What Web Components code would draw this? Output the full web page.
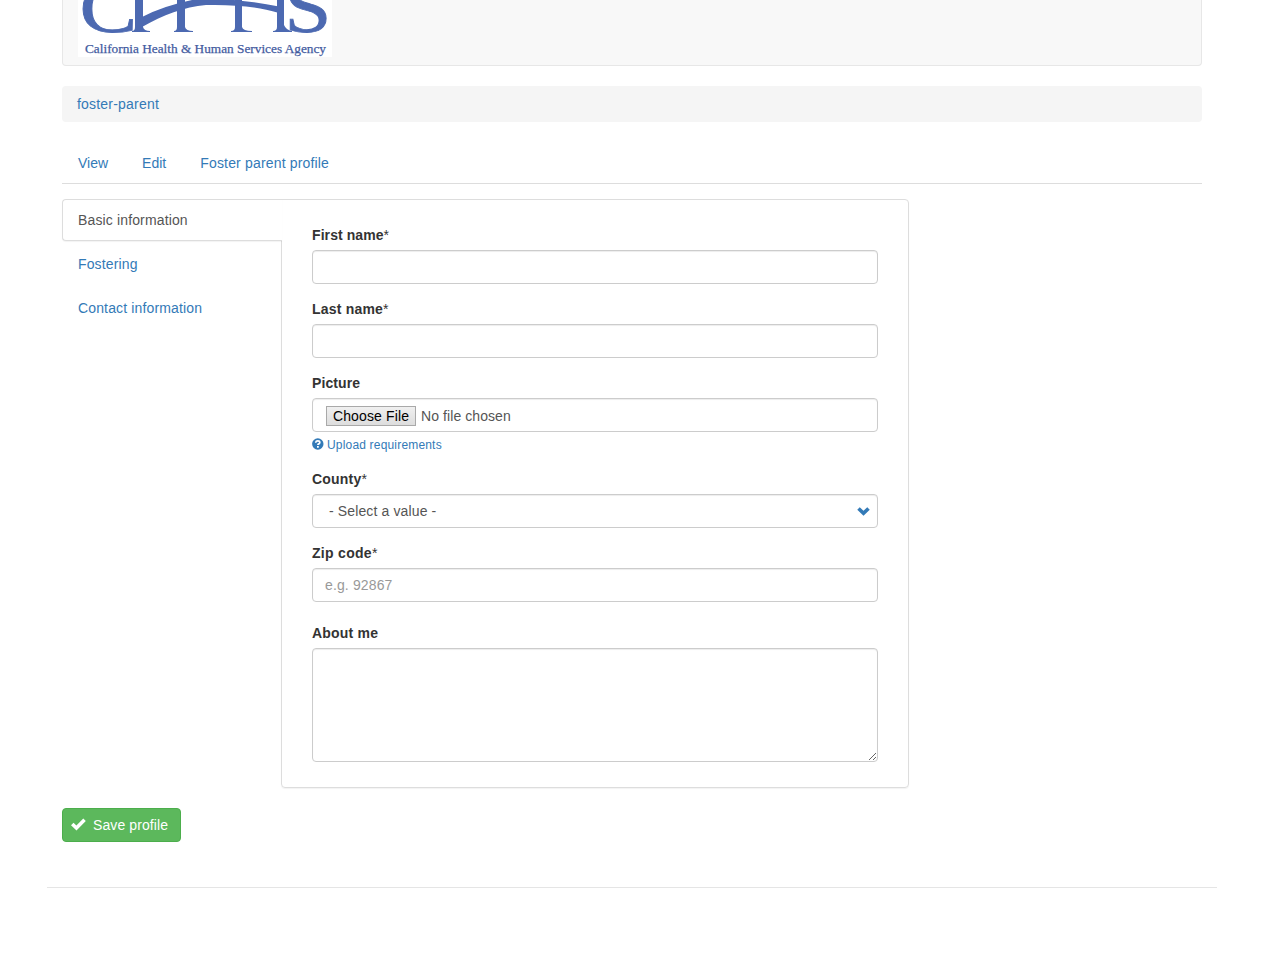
<!DOCTYPE html>
<html lang="en">
<head>
<meta charset="utf-8">
<title>foster-parent</title>
<style>
html,body{margin:0;background:#fff}
body{font:14px/20px "Liberation Sans",Arial,sans-serif;color:#333;height:959px;overflow:hidden}
</style>
</head>
<body>
<profile-page></profile-page>
<script>
const define = (name, html, setup) => {
  const t = document.createElement('template');
  t.innerHTML = '<style>*{box-sizing:border-box}a{color:#337ab7;text-decoration:none}</style>' + html;
  customElements.define(name, class extends HTMLElement {
    constructor() {
      super();
      this.attachShadow({mode: 'open'}).append(t.content.cloneNode(true));
    }
    connectedCallback() { if (setup) setup(this, this.shadowRoot); }
  });
};

define('agency-logo', `<style>:host{display:block;width:254px;height:57px;background:#fff}svg{display:block}</style>
<svg width="254" height="57" viewBox="78 0 254 57" fill="#4c69b1" role="img" aria-label="California Health and Human Services Agency">
  <text transform="translate(79.5 32) scale(1.2 1)" font-family="Liberation Serif,serif" font-size="72" stroke="#4c69b1" stroke-width=".8">C</text>
  <text transform="translate(284.5 32) scale(1.17 1)" font-family="Liberation Serif,serif" font-size="72" stroke="#4c69b1" stroke-width=".8">S</text>
  <path d="M135 0H143V27Q144 31 150 31V32H132V31Q135 31 135 27Z"/>
  <path d="M177 0H185V27Q186 31 193 31V32H174V31Q177 31 177 27Z"/>
  <path d="M235 0H242V27Q243 31 252 31V32H231V31Q235 31 235 27Z"/>
  <path d="M277 0H284V25Q286 30 292 31V32H273V31Q277 31 277 27Z"/>
  <path d="M142 17Q163 6 192 0H234Q256 2 279 6.5V13C254 6 233 4.500 206 5C184 7 163 15 142 27Z"/>
  <text x="85" y="52.500" font-family="Liberation Serif,serif" font-size="13" textLength="241" lengthAdjust="spacingAndGlyphs" fill="#435b9f" stroke="#435b9f" stroke-width=".25">California Health &amp; Human Services Agency</text>
</svg>`);

define('site-header', `<style>:host{display:block;height:66px;padding:0 15px;background:#f8f8f8;border:1px solid #e7e7e7;border-top:0;border-radius:0 0 4px 4px}</style><slot></slot>`);

define('crumb-bar', `<style>:host{display:block;margin-top:20px;height:36px;padding:8px 15px;background:#f5f5f5;border-radius:4px;letter-spacing:.2px}</style><a href="#"><slot></slot></a>`);

define('primary-tabs', `<style>:host{display:flex;gap:2px;margin-top:20px;height:42px;border-bottom:1px solid #ddd}</style><slot></slot>`);
define('tab-link', `<style>:host{display:block;padding:11px 16px}:host(:last-child){letter-spacing:.17px}</style><a href="#"><slot></slot></a>`);

define('side-tab', `<style>:host{display:block;height:42px;padding:11px 16px 9px;margin-bottom:2px;color:#337ab7;letter-spacing:.14px}
:host([active]){position:relative;width:220px;z-index:1;color:#555;background:#fff;border:1px solid #ddd;border-right:0;padding:10px 15px;border-radius:4px 0 0 4px;box-shadow:0 1px 1px rgba(0,0,0,.05)}</style><slot></slot>`);

define('vertical-tabs', `<style>:host{display:flex;margin-top:15px;width:847px}
nav{width:219px;flex:none}
section{flex:1;height:589px;padding:25px 30px 0;border:1px solid #ddd;border-radius:0 4px 4px 4px;box-shadow:0 1px 1px rgba(0,0,0,.05)}</style>
<nav><slot name="tab"></slot></nav><section><slot></slot></section>`);

define('form-field', `<style>:host{display:block;margin-bottom:15px}
label{display:block;font-weight:700;margin-bottom:5px;letter-spacing:var(--track,.2px)}
label span{font-weight:400;letter-spacing:0;color:#333}</style>
<label><b></b><span></span></label><slot></slot>`, (el, r) => {
  r.querySelector('b').textContent = el.getAttribute('label');
  r.querySelector('span').textContent = el.hasAttribute('required') ? '*' : '';
});

const control = `display:block;width:100%;height:34px;padding:6px 12px;margin:0;font:inherit;letter-spacing:.13px;color:#555;background:#fff;border:1px solid #ccc;border-radius:4px;box-shadow:inset 0 1px 1px rgba(0,0,0,.075)`;
define('text-input', `<style>:host{display:block}input{${control}}input::placeholder{color:#999;opacity:1}</style><input type="text">`, (el, r) => {
  r.querySelector('input').placeholder = el.getAttribute('placeholder') || '';
});
define('text-box', `<style>:host{display:block}textarea{${control};height:114px;resize:vertical}</style><textarea></textarea>`);
define('file-input', `<style>:host{${control};display:flex;align-items:center;padding:0 13px}
button{height:20px;width:90px;margin:1px 5px 0 0;padding:0;font:inherit;letter-spacing:.13px;line-height:18px;color:#000;border:1px solid #a9a9a9;border-radius:0;background:linear-gradient(#f0f0f0,#ddd)}
span{margin-top:1px;letter-spacing:.08px}</style><button type="button">Choose File</button><span>No file chosen</span>`);
define('help-link', `<style>:host{display:flex;align-items:center;gap:3px;height:17px;margin-top:5px;font-size:12px;line-height:17px;letter-spacing:.18px}svg{display:block;margin-top:-3px}</style>
<svg width="12" height="12" viewBox="0 0 12 12"><circle cx="5.8" cy="6" r="5.7" fill="#337ab7"/><path d="M3.8 4.8V4.3Q3.9 2.8 5.8 2.8Q7.8 2.8 7.8 4.4Q7.8 5.4 6.8 5.9Q5.9 6.3 5.9 7.1" fill="none" stroke="#fff" stroke-width="1.7"/><path d="M5 8h1.8v1.7H5z" fill="#fff"/></svg><a href="#"><slot></slot></a>`);
define('select-box', `<style>:host{${control};display:flex;justify-content:space-between;align-items:center;padding:0 7px 0 16px}svg{display:block}</style><slot></slot>
<svg width="13" height="9" viewBox="0 0 13 9"><path d="M1.500 1.500 6.500 6.200l5-4.700" fill="none" stroke="#337ab7" stroke-width="3.600"/></svg>`);

define('save-button', `<style>:host{display:block;margin-top:20px}button{display:flex;align-items:center;gap:7px;height:34px;width:119px;padding:0 0 0 8px;font:inherit;letter-spacing:.09px;color:#fff;background:#5cb85c;border:1px solid #4cae4c;border-radius:4px}svg{margin-top:-1px}</style>
<button type="button"><svg width="15" height="13" viewBox="0 0 15 13"><path fill="#fff" d="M0 7.2 2.5 4.7 5.4 7.5 12.3.5 14.8 3 5.5 12.5Z"/></svg><slot></slot></button>`);

define('profile-page', `<style>:host{display:block;width:1170px;margin-left:47px}main{padding:0 15px}hr{margin:45px 0 0;border:0;border-top:1px solid #e5e5e5}
.zip{margin-bottom:21px;--track:.3px}.tight{--track:.08px}</style>
<main>
<site-header><agency-logo></agency-logo></site-header>
<crumb-bar>foster-parent</crumb-bar>
<primary-tabs><tab-link>View</tab-link><tab-link>Edit</tab-link><tab-link>Foster parent profile</tab-link></primary-tabs>
<vertical-tabs>
<side-tab slot="tab" active>Basic information</side-tab><side-tab slot="tab">Fostering</side-tab><side-tab slot="tab">Contact information</side-tab>
<form-field class="tight" label="First name" required><text-input></text-input></form-field>
<form-field label="Last name" required><text-input></text-input></form-field>
<form-field class="tight" label="Picture"><file-input></file-input><help-link>Upload requirements</help-link></form-field>
<form-field label="County" required><select-box>- Select a value -</select-box></form-field>
<form-field class="zip" label="Zip code" required><text-input placeholder="e.g. 92867"></text-input></form-field>
<form-field label="About me"><text-box></text-box></form-field>
</vertical-tabs>
<save-button>Save profile</save-button>
</main><hr>`);
</script>
</body>
</html>
